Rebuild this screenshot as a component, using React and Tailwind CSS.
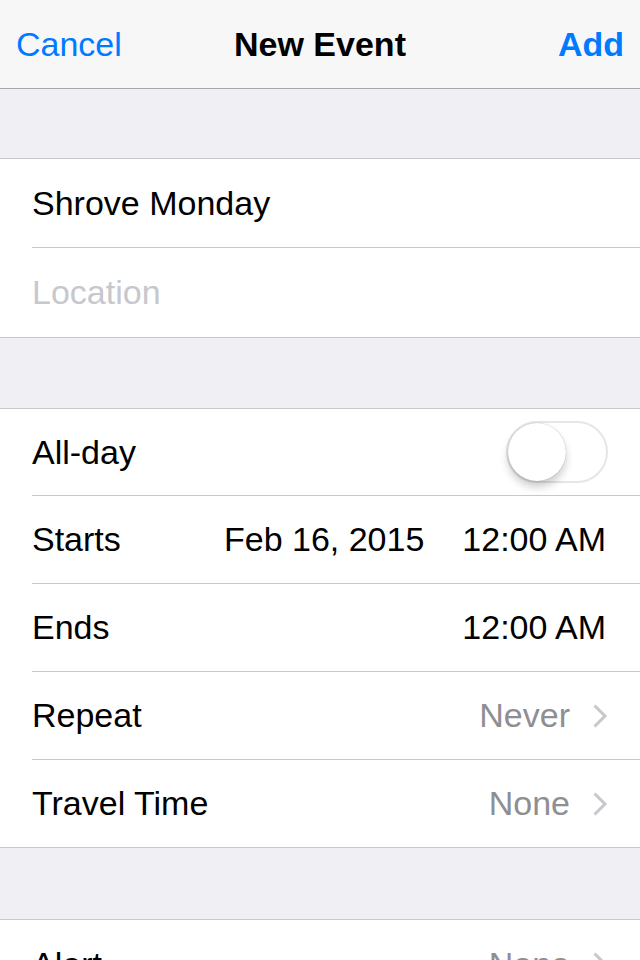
import React, { useState } from 'react';

const Chevron = () => (
  <svg width="16" height="26" viewBox="0 0 16 26" className="ml-[22px] shrink-0">
    <path d="M2.5 2.5 L13 13 L2.5 23.5" fill="none" stroke="#c7c7cc" strokeWidth="3" />
  </svg>
);

// heights include the 1px bottom rule (border-box)
const Row = ({ label, children, h = 'h-[88px]' }) => (
  <div className="pl-8">
    <div className={`${h} flex items-center pr-8 border-b border-[#c8c7cc]`}>
      <span className="text-black">{label}</span>
      <div className="ml-auto flex items-center">{children}</div>
    </div>
  </div>
);

const Toggle = ({ on, onChange }) => (
  <button
    onClick={() => onChange(!on)}
    className={`relative w-[102px] h-[62px] rounded-full border-2 ${on ? 'bg-[#4cd964] border-[#4cd964]' : 'bg-white border-[#e5e5ea]'}`}
  >
    <span
      className={`absolute top-0 ${on ? 'left-[40px]' : 'left-0'} w-[58px] h-[58px] rounded-full bg-white shadow-[0_6px_8px_rgba(0,0,0,0.2),0_0_1px_rgba(0,0,0,0.35)]`}
    />
  </button>
);

export default function App() {
  const [allDay, setAllDay] = useState(false);

  return (
    <div className="w-[640px] h-[960px] overflow-hidden bg-[#efeff4] text-[34px] font-['Liberation_Sans',Arial,sans-serif]">
      {/* nav */}
      <div className="h-[89px] bg-[#f7f7f7] border-b border-[#a7a7aa] flex items-center px-4 relative">
        <span className="text-[#007aff]">Cancel</span>
        <span className="absolute left-0 right-0 text-center font-bold text-black pointer-events-none">New Event</span>
        <span className="ml-auto text-[#007aff] font-bold">Add</span>
      </div>

      <div className="h-[70px] border-b border-[#c8c7cc]" />

      <div className="bg-white">
        <Row label="Shrove Monday" h="h-[89px]" />
        <div className="h-[90px] pl-8 flex items-center text-[#c7c7cd] border-b border-[#c8c7cc]">Location</div>
      </div>

      <div className="h-[71px] border-b border-[#c8c7cc]" />

      <div className="bg-white">
        <Row label="All-day" h="h-[87px]">
          <Toggle on={allDay} onChange={setAllDay} />
        </Row>
        <Row label="Starts">
          <span className="text-black">Feb 16, 2015</span>
          <span className="text-black ml-[38px] mr-[2px]">12:00 AM</span>
        </Row>
        <Row label="Ends">
          <span className="text-black mr-[2px]">12:00 AM</span>
        </Row>
        <Row label="Repeat">
          <span className="text-[#8e8e93]">Never</span>
          <Chevron />
        </Row>
        <div className="h-[88px] pl-8 pr-8 flex items-center border-b border-[#c8c7cc]">
          <span>Travel Time</span>
          <div className="ml-auto flex items-center">
            <span className="text-[#8e8e93]">None</span>
            <Chevron />
          </div>
        </div>
      </div>

      <div className="h-[72px] border-b border-[#c8c7cc]" />

      <div className="bg-white">
        <div className="h-[88px] pl-8 pr-8 flex items-center">
          <span>Alert</span>
          <div className="ml-auto flex items-center">
            <span className="text-[#8e8e93]">None</span>
            <Chevron />
          </div>
        </div>
      </div>
    </div>
  );
}
